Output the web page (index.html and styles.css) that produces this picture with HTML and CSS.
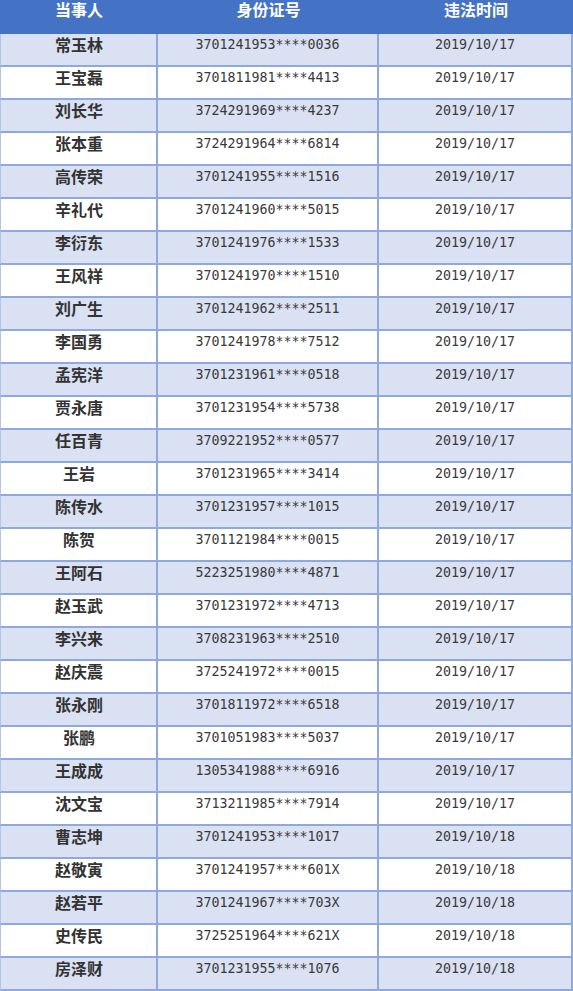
FILE: index.html
```html
<!DOCTYPE html>
<html lang="zh-CN">
<head>
<meta charset="utf-8">
<title>名单</title>
<link rel="stylesheet" href="styles.css">
</head>
<body>
<table class="list">
<thead>
<tr><th class="c1">当事人</th><th class="c2">身份证号</th><th class="c3">违法时间</th></tr>
</thead>
<tbody>
<tr><td class="name">常玉林</td><td class="num">3701241953****0036</td><td class="num last">2019/10/17</td></tr>
<tr><td class="name">王宝磊</td><td class="num">3701811981****4413</td><td class="num last">2019/10/17</td></tr>
<tr><td class="name">刘长华</td><td class="num">3724291969****4237</td><td class="num last">2019/10/17</td></tr>
<tr><td class="name">张本重</td><td class="num">3724291964****6814</td><td class="num last">2019/10/17</td></tr>
<tr><td class="name">高传荣</td><td class="num">3701241955****1516</td><td class="num last">2019/10/17</td></tr>
<tr><td class="name">辛礼代</td><td class="num">3701241960****5015</td><td class="num last">2019/10/17</td></tr>
<tr><td class="name">李衍东</td><td class="num">3701241976****1533</td><td class="num last">2019/10/17</td></tr>
<tr><td class="name">王风祥</td><td class="num">3701241970****1510</td><td class="num last">2019/10/17</td></tr>
<tr><td class="name">刘广生</td><td class="num">3701241962****2511</td><td class="num last">2019/10/17</td></tr>
<tr><td class="name">李国勇</td><td class="num">3701241978****7512</td><td class="num last">2019/10/17</td></tr>
<tr><td class="name">孟宪洋</td><td class="num">3701231961****0518</td><td class="num last">2019/10/17</td></tr>
<tr><td class="name">贾永唐</td><td class="num">3701231954****5738</td><td class="num last">2019/10/17</td></tr>
<tr><td class="name">任百青</td><td class="num">3709221952****0577</td><td class="num last">2019/10/17</td></tr>
<tr><td class="name">王岩</td><td class="num">3701231965****3414</td><td class="num last">2019/10/17</td></tr>
<tr><td class="name">陈传水</td><td class="num">3701231957****1015</td><td class="num last">2019/10/17</td></tr>
<tr><td class="name">陈贺</td><td class="num">3701121984****0015</td><td class="num last">2019/10/17</td></tr>
<tr><td class="name">王阿石</td><td class="num">5223251980****4871</td><td class="num last">2019/10/17</td></tr>
<tr><td class="name">赵玉武</td><td class="num">3701231972****4713</td><td class="num last">2019/10/17</td></tr>
<tr><td class="name">李兴来</td><td class="num">3708231963****2510</td><td class="num last">2019/10/17</td></tr>
<tr><td class="name">赵庆震</td><td class="num">3725241972****0015</td><td class="num last">2019/10/17</td></tr>
<tr><td class="name">张永刚</td><td class="num">3701811972****6518</td><td class="num last">2019/10/17</td></tr>
<tr><td class="name">张鹏</td><td class="num">3701051983****5037</td><td class="num last">2019/10/17</td></tr>
<tr><td class="name">王成成</td><td class="num">1305341988****6916</td><td class="num last">2019/10/17</td></tr>
<tr><td class="name">沈文宝</td><td class="num">3713211985****7914</td><td class="num last">2019/10/17</td></tr>
<tr><td class="name">曹志坤</td><td class="num">3701241953****1017</td><td class="num last">2019/10/18</td></tr>
<tr><td class="name">赵敬寅</td><td class="num">3701241957****601X</td><td class="num last">2019/10/18</td></tr>
<tr><td class="name">赵若平</td><td class="num">3701241967****703X</td><td class="num last">2019/10/18</td></tr>
<tr><td class="name">史传民</td><td class="num">3725251964****621X</td><td class="num last">2019/10/18</td></tr>
<tr><td class="name">房泽财</td><td class="num">3701231955****1076</td><td class="num last">2019/10/18</td></tr>
</tbody>
</table>
</body>
</html>
```

FILE: styles.css
```css
html, body {
  margin: 0;
  padding: 0;
  background: #ffffff;
}

.list {
  width: 573px;
  border-collapse: separate;
  border-spacing: 0;
  table-layout: fixed;
  font-family: "Noto Sans CJK SC", "DejaVu Sans", sans-serif;
}

.list th {
  height: 34px;
  box-sizing: border-box;
  padding: 1px 0 0 0;
  background: #4472c4;
  color: #ffffff;
  font-size: 16px;
  font-weight: bold;
  line-height: 17px;
  vertical-align: top;
  text-align: center;
}

.list th.c1 { width: 158px; }
.list th.c2 { width: 221px; }
.list th.c3 { width: 194px; }

.list td {
  height: 33px;
  box-sizing: border-box;
  padding: 0;
  border-right: 2px solid #8ea9db;
  border-bottom: 2px solid #8ea9db;
  vertical-align: top;
  text-align: center;
  color: #333333;
  line-height: 20px;
}

.list tbody tr:nth-child(odd) td {
  background: #d9e1f2;
}

.list td.name {
  border-left: 1px solid #b4c6e7;
  padding-left: 1px;
  font-family: "Noto Sans CJK SC", sans-serif;
  font-size: 16px;
  font-weight: bold;
  color: #333333;
}

.list td.num {
  font-family: "DejaVu Sans Mono", "Liberation Mono", monospace;
  font-size: 13.3px;
  padding-top: 1px;
  color: #3a3a3a;
}
```
